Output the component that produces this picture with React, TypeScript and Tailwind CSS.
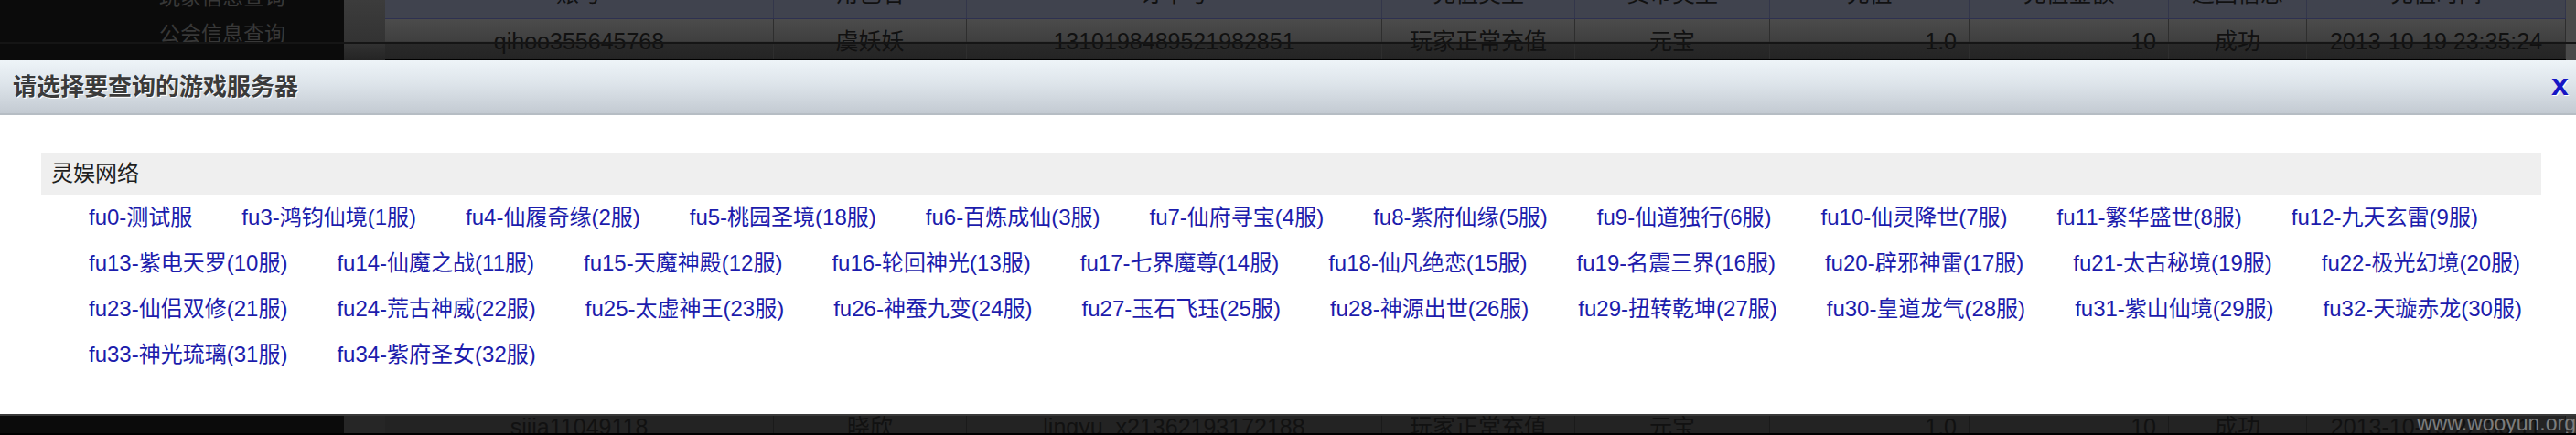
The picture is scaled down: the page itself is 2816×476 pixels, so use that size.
const FONT = "font-['Liberation_Sans','Noto_Sans_CJK_SC',sans-serif]";
const COLS = 'grid grid-cols-[425px_211px_454px_211px_213px_218px_218px_151px_283px]';

type Col = { head: string; top: string; bottom: string; right?: boolean };

const cols: Col[] = [
  { head: '账号', top: 'qihoo355645768', bottom: 'sijia11049118' },
  { head: '角色名', top: '虞妖妖', bottom: '晓欣' },
  { head: '订单号', top: '1310198489521982851', bottom: 'lingyu_x21362193172188' },
  { head: '充值类型', top: '玩家正常充值', bottom: '玩家正常充值' },
  { head: '货币类型', top: '元宝', bottom: '元宝' },
  { head: '充值', top: '1.0', bottom: '1.0', right: true },
  { head: '充值金额', top: '10', bottom: '10', right: true },
  { head: '返回信息', top: '成功', bottom: '成功' },
  { head: '充值时间', top: '2013-10-19 23:35:24', bottom: '2013-10-19 22:33:11' },
];

const servers: string[][] = [
  [
    'fu0-测试服',
    'fu3-鸿钧仙境(1服)',
    'fu4-仙履奇缘(2服)',
    'fu5-桃园圣境(18服)',
    'fu6-百炼成仙(3服)',
    'fu7-仙府寻宝(4服)',
    'fu8-紫府仙缘(5服)',
    'fu9-仙道独行(6服)',
    'fu10-仙灵降世(7服)',
    'fu11-繁华盛世(8服)',
    'fu12-九天玄雷(9服)',
  ],
  [
    'fu13-紫电天罗(10服)',
    'fu14-仙魔之战(11服)',
    'fu15-天魔神殿(12服)',
    'fu16-轮回神光(13服)',
    'fu17-七界魔尊(14服)',
    'fu18-仙凡绝恋(15服)',
    'fu19-名震三界(16服)',
    'fu20-辟邪神雷(17服)',
    'fu21-太古秘境(19服)',
    'fu22-极光幻境(20服)',
  ],
  [
    'fu23-仙侣双修(21服)',
    'fu24-荒古神威(22服)',
    'fu25-太虚神王(23服)',
    'fu26-神蚕九变(24服)',
    'fu27-玉石飞珏(25服)',
    'fu28-神源出世(26服)',
    'fu29-扭转乾坤(27服)',
    'fu30-皇道龙气(28服)',
    'fu31-紫山仙境(29服)',
    'fu32-天璇赤龙(30服)',
  ],
  ['fu33-神光琉璃(31服)', 'fu34-紫府圣女(32服)'],
];

function BackgroundTop() {
  return (
    <div className="relative flex h-[66px] overflow-hidden">
      {/* side menu */}
      <div className="w-[376px] shrink-0 bg-[#0b0b0b] pl-[174px] text-[23px] text-[#383838]">
        <div className="-mt-[23px] leading-[40px]">玩家信息查询</div>
        <div className="leading-[40px]">公会信息查询</div>
      </div>
      <div className="w-[45px] shrink-0 bg-[linear-gradient(#3c3c3c,#333_70%,#242424)]" />
      {/* record table */}
      <div className="w-[2384px] shrink-0 text-[25px] text-[#111]">
        <div className={`${COLS} h-[21px] overflow-hidden border-b border-[#2e3150] bg-[#40434e]`}>
          {cols.map((c, i) => (
            <div key={i} className="border-r border-[#33364a] text-center">
              <div className="-mt-[28px] leading-[43px]">{c.head}</div>
            </div>
          ))}
        </div>
        <div className={`${COLS} h-[44px] bg-[linear-gradient(#4b4b4b,#3f3f3f_55%,#2a2a2a_58%,#242424)]`}>
          {cols.map((c, i) => (
            <div
              key={i}
              className={`flex items-center border-r border-[#2e2e2e] pt-[6px] ${
                c.right ? 'justify-end pr-[13px]' : 'justify-center'
              }`}
            >
              {c.top}
            </div>
          ))}
        </div>
      </div>
      <div className="flex-1 bg-[#4a4a4a]" />
      <div className="absolute inset-x-0 top-[46px] h-[2px] bg-[#151515]" />
    </div>
  );
}

function BackgroundBottom() {
  return (
    <div className="relative flex h-[21px] overflow-hidden border-t-2 border-[#3a3a3a]">
      <div className="w-[376px] shrink-0 bg-[#0b0b0b]" />
      <div className="w-[45px] shrink-0 bg-[#262626]" />
      <div className={`${COLS} w-[2384px] shrink-0 bg-[#232323] text-[25px] text-[#111]`}>
        {cols.map((c, i) => (
          <div
            key={i}
            className={`flex border-r border-[#1a1a1a] leading-[25px] ${
              c.right ? 'justify-end pr-[13px]' : 'justify-center'
            }`}
          >
            {c.bottom}
          </div>
        ))}
      </div>
      <div className="flex-1 bg-[#303030]" />
      <div className="absolute right-0 bottom-[-6px] text-[23px] text-[#7c7c7c]">www.wooyun.org</div>
    </div>
  );
}

function ServerDialog() {
  return (
    <div>
      <div className="flex h-[60px] items-center justify-between border-b-2 border-[#b6bdc4] bg-[linear-gradient(#eef4f8,#dde4ea_45%,#c3cad2)] pl-[14px] pr-[8px]">
        <h2 className="text-[26px] font-semibold text-[#3a3a3a] [text-shadow:1px_1px_0_#fff]">
          请选择要查询的游戏服务器
        </h2>
        <button className="pb-[6px] text-[34px] font-bold leading-none text-[#1616c4] [text-shadow:1px_1px_0_#fff]">
          x
        </button>
      </div>
      <div className="h-[327px] bg-white pt-[41px] pr-[38px] pl-[45px]">
        <div className="flex h-[46px] items-center bg-[#efefef] pl-[11px] text-[24px] text-[#1e1e1e]">灵娱网络</div>
        <div className="pl-[52px] text-[24px] leading-[50px] text-[#1c1cac]">
          {servers.map((row, r) => (
            <div key={r} className="flex gap-x-[54px] whitespace-nowrap">
              {row.map((s) => (
                <a key={s} className="cursor-pointer hover:underline">
                  {s}
                </a>
              ))}
            </div>
          ))}
        </div>
      </div>
    </div>
  );
}

export default function App() {
  return (
    <div className={`h-[476px] w-[2816px] overflow-hidden bg-black ${FONT}`}>
      <BackgroundTop />
      <ServerDialog />
      <BackgroundBottom />
    </div>
  );
}
